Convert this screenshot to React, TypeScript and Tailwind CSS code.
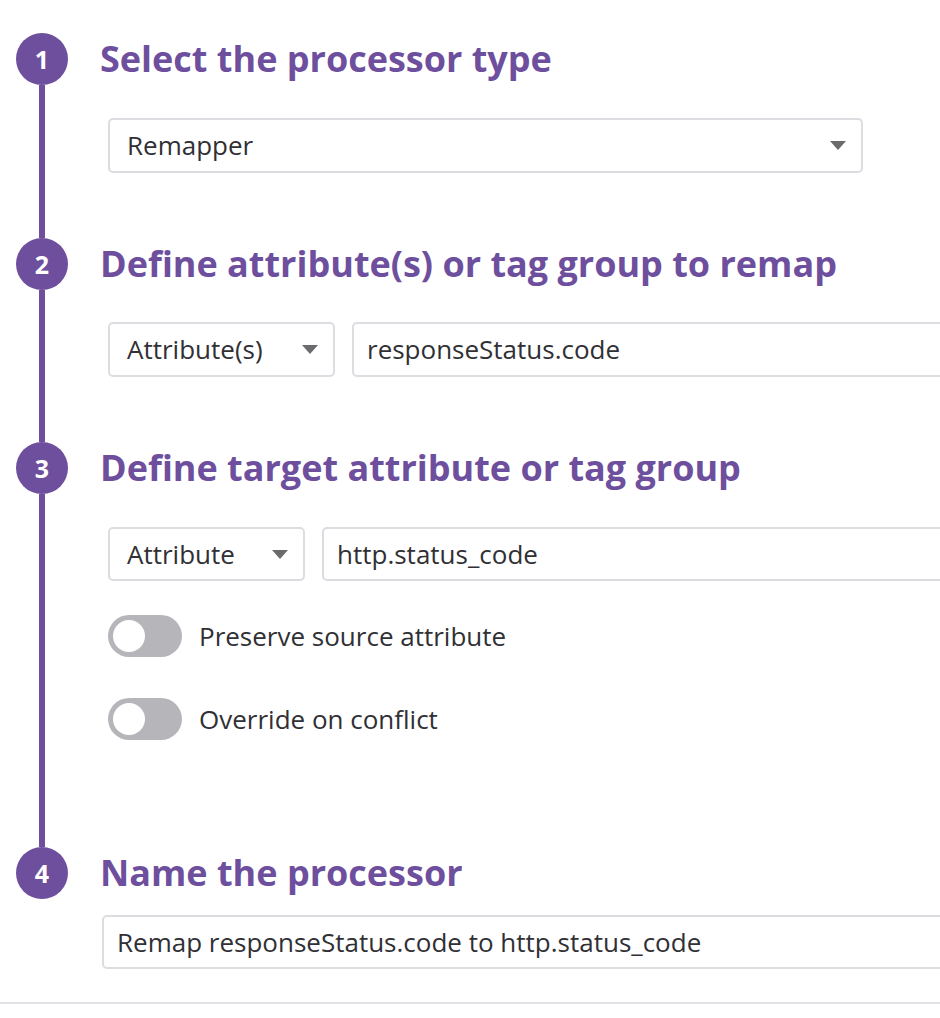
import React from "react";

const Caret = () => (
  <svg width="16" height="9" viewBox="0 0 16 9" className="shrink-0">
    <polygon points="0,0 16,0 8,9" fill="#6b6b6e" />
  </svg>
);

const Circle = ({ n }: { n: number }) => (
  <div className="w-[52px] h-[52px] rounded-full bg-[#6e4f9e] flex items-center justify-center text-white text-[25px] font-bold leading-none shrink-0">
    {n}
  </div>
);

const Toggle = ({ label }: { label: string }) => (
  <div className="flex items-center gap-[17px]">
    <div className="w-[74px] h-[42px] rounded-full bg-[#b6b5ba] flex items-center pl-[5px]">
      <div className="w-[32px] h-[32px] rounded-full bg-white" />
    </div>
    <span className="text-[26px] text-[#303035]">{label}</span>
  </div>
);

const Step = ({
  n,
  title,
  line,
  children,
}: {
  n: number;
  title: string;
  line: boolean;
  children: React.ReactNode;
}) => (
  <div className="flex">
    <div className="w-[84px] shrink-0 flex flex-col items-center">
      <Circle n={n} />
      {line && <div className="flex-1 w-[6px] bg-[#6e4f9e]" />}
    </div>
    <div className="flex-1 min-w-0">
      <div className="h-[52px] flex items-center pl-[16px]">
        <h2 className="text-[36px] font-bold text-[#6e4f9e] leading-none whitespace-nowrap">
          {title}
        </h2>
      </div>
      {children}
    </div>
  </div>
);

export default function App() {
  return (
    <div
      className="w-[940px] h-[1018px] bg-white overflow-hidden pt-[33px]"
      style={{ fontFamily: '"Open Sans", "Noto Sans", sans-serif' }}
    >
      <Step n={1} title="Select the processor type" line>
        <div className="pl-[24px] pt-[33px] pb-[65px]">
          <div className="w-[755px] h-[55px] border-2 border-[#dcdce1] rounded-[5px] flex items-center justify-between pl-[17px] pr-[15px]">
            <span className="text-[26px] text-[#303035]">Remapper</span>
            <Caret />
          </div>
        </div>
      </Step>
      <Step n={2} title="Define attribute(s) or tag group to remap" line>
        <div className="pl-[24px] pt-[32px] pb-[65px] flex gap-[17px]">
          <div className="w-[227px] shrink-0 h-[55px] border-2 border-[#dcdce1] rounded-[5px] flex items-center justify-between pl-[17px] pr-[15px]">
            <span className="text-[26px] text-[#303035]">Attribute(s)</span>
            <Caret />
          </div>
          <div className="w-[640px] shrink-0 h-[55px] border-2 border-[#dcdce1] rounded-[5px] flex items-center pl-[13px]">
            <span className="text-[26px] text-[#303035]">responseStatus.code</span>
          </div>
        </div>
      </Step>
      <Step n={3} title="Define target attribute or tag group" line>
        <div className="pl-[24px] pt-[33px] pb-[107px] flex flex-col">
          <div className="flex gap-[17px]">
            <div className="w-[197px] shrink-0 h-[54px] border-2 border-[#dcdce1] rounded-[5px] flex items-center justify-between pl-[17px] pr-[15px]">
              <span className="text-[26px] text-[#303035]">Attribute</span>
              <Caret />
            </div>
            <div className="w-[660px] shrink-0 h-[54px] border-2 border-[#dcdce1] rounded-[5px] flex items-center pl-[13px]">
              <span className="text-[26px] text-[#303035]">http.status_code</span>
            </div>
          </div>
          <div className="mt-[34px]">
            <Toggle label="Preserve source attribute" />
          </div>
          <div className="mt-[41px]">
            <Toggle label="Override on conflict" />
          </div>
        </div>
      </Step>
      <Step n={4} title="Name the processor" line={false}>
        <div className="pl-[18px] pt-[16px]">
          <div className="w-[880px] h-[54px] border-2 border-[#dcdce1] rounded-[5px] flex items-center pl-[13px]">
            <span className="text-[26px] text-[#303035] whitespace-nowrap">
              Remap responseStatus.code to http.status_code
            </span>
          </div>
        </div>
      </Step>
      <div className="mt-[33px] h-[2px] bg-[#e0e0e5]" />
    </div>
  );
}
